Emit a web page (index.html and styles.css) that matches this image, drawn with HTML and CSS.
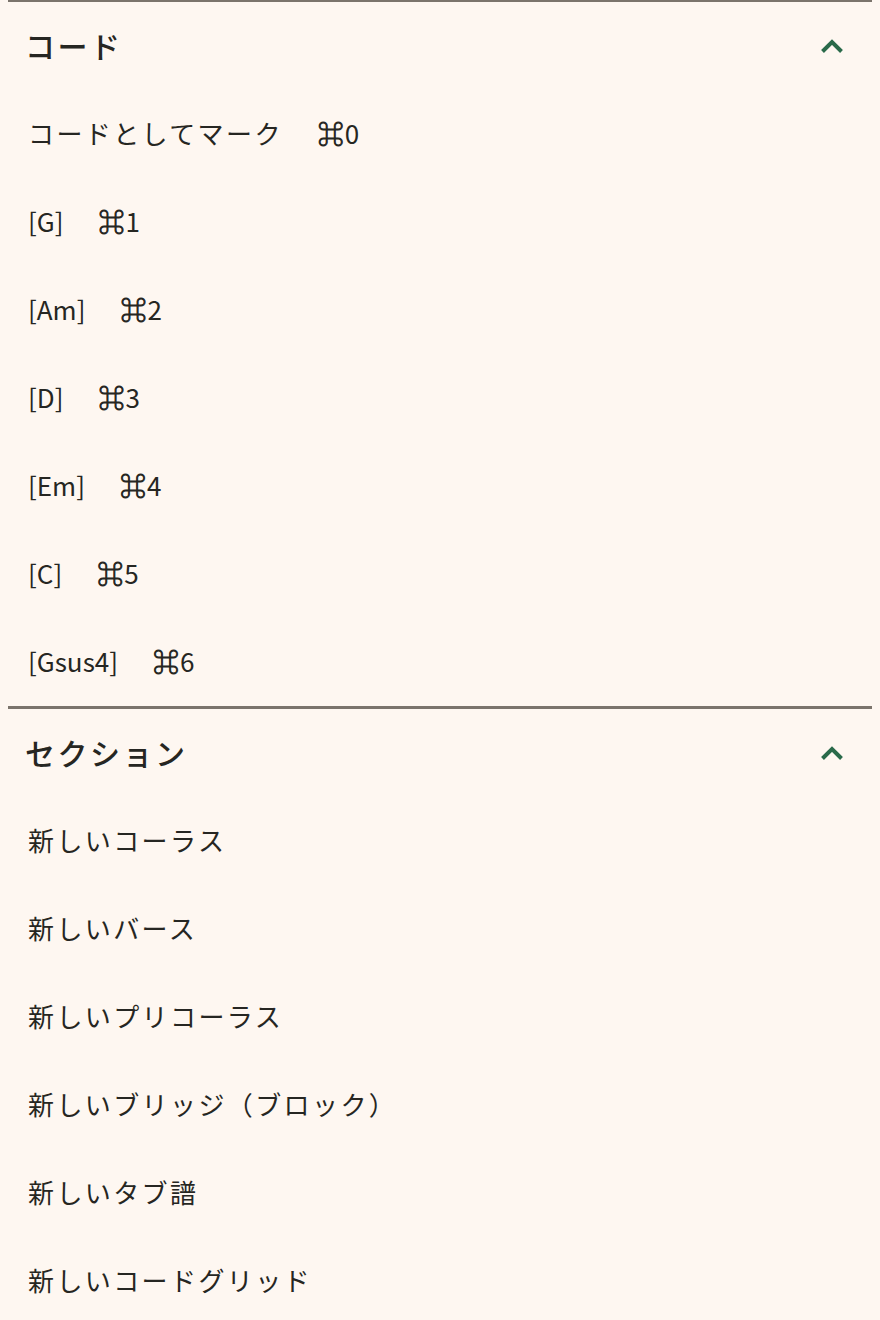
FILE: index.html
```html
<!DOCTYPE html>
<html lang="ja">
<head>
<meta charset="utf-8">
<title>Menu</title>
<link rel="stylesheet" href="styles.css">
</head>
<body>
<div class="menu">
  <section class="group">
    <div class="group-head">
      <h2 class="group-title">コード</h2>
      <svg class="chev" viewBox="0 0 24 16" width="24" height="16" aria-hidden="true"><polyline points="2.5,13.5 12,4 21.5,13.5" fill="none" stroke="currentColor" stroke-width="4" stroke-linejoin="miter"/></svg>
    </div>
    <ul class="items">
      <li class="item"><span class="label">コードとしてマーク</span><span class="key"><span class="cmd">⌘</span>0</span></li>
      <li class="item"><span class="label latin">[G]</span><span class="key"><span class="cmd">⌘</span>1</span></li>
      <li class="item"><span class="label latin">[Am]</span><span class="key"><span class="cmd">⌘</span>2</span></li>
      <li class="item"><span class="label latin">[D]</span><span class="key"><span class="cmd">⌘</span>3</span></li>
      <li class="item"><span class="label latin">[Em]</span><span class="key"><span class="cmd">⌘</span>4</span></li>
      <li class="item"><span class="label latin">[C]</span><span class="key"><span class="cmd">⌘</span>5</span></li>
      <li class="item"><span class="label latin">[Gsus4]</span><span class="key"><span class="cmd">⌘</span>6</span></li>
    </ul>
  </section>
  <section class="group">
    <div class="group-head">
      <h2 class="group-title">セクション</h2>
      <svg class="chev" viewBox="0 0 24 16" width="24" height="16" aria-hidden="true"><polyline points="2.5,13.5 12,4 21.5,13.5" fill="none" stroke="currentColor" stroke-width="4" stroke-linejoin="miter"/></svg>
    </div>
    <ul class="items">
      <li class="item"><span class="label">新しいコーラス</span></li>
      <li class="item"><span class="label">新しいバース</span></li>
      <li class="item"><span class="label">新しいプリコーラス</span></li>
      <li class="item"><span class="label">新しいブリッジ（ブロック）</span></li>
      <li class="item"><span class="label">新しいタブ譜</span></li>
      <li class="item"><span class="label">新しいコードグリッド</span></li>
    </ul>
  </section>
</div>
</body>
</html>
```

FILE: styles.css
```css
html, body {
  background: #fef7f1;
}
body {
  margin: 0 8px;
  font-family: "Noto Sans CJK JP", "Noto Sans", sans-serif;
  color: #262622;
}
.menu {
  margin-top: -1px;
}
.group {
  border-top: 3px solid #7b746c;
}
.group-head {
  height: 88px;
  box-sizing: border-box;
  padding: 0 28px 2px 17px;
  display: flex;
  align-items: center;
  justify-content: space-between;
}
.group-title {
  margin: 0;
  font-size: 30px;
  font-weight: 500;
  letter-spacing: 2.5px;
}
.chev {
  color: #2a6a4a;
  display: block;
  margin-top: 1px;
}
.items {
  list-style: none;
  margin: 0;
  padding: 0;
}
.item {
  height: 88px;
  box-sizing: border-box;
  padding: 0 20px 4px;
  display: flex;
  align-items: center;
  gap: 35px;
  font-size: 26px;
  letter-spacing: 2.4px;
}
.label.latin,
.key {
  letter-spacing: 0;
}
.cmd {
  -webkit-text-stroke: 0.9px currentColor;
  margin-right: 1px;
}
```
